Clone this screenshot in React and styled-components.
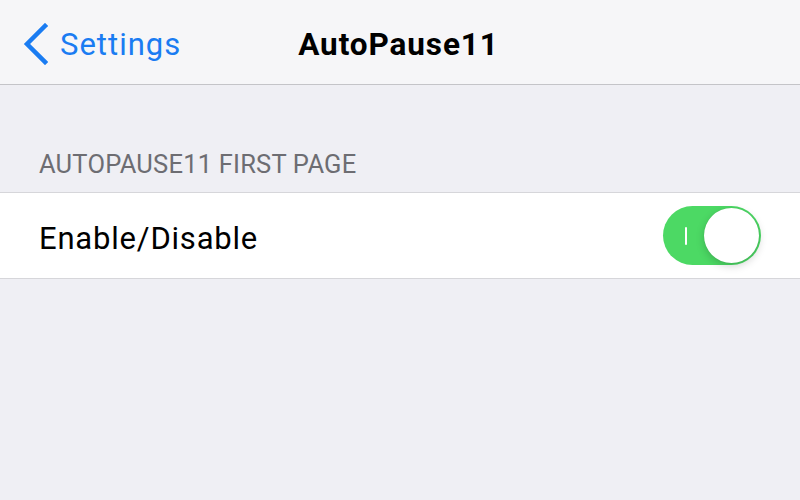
import React from "react";
import styled, { createGlobalStyle } from "styled-components";

const Global = createGlobalStyle`
  html, body { margin: 0; padding: 0; }
  body {
    width: 800px; height: 500px; overflow: hidden;
    background: #efeff4;
    font-family: Roboto, "Liberation Sans", sans-serif;
  }
`;

const Page = styled.div`
  display: flex;
  flex-direction: column;
  height: 500px;
  background: #efeff4;
`;

const NavBar = styled.div`
  height: 85px;
  box-sizing: border-box;
  background: #f6f6f8;
  border-bottom: 1px solid #c4c4c8;
  display: grid;
  grid-template-columns: 1fr auto 1fr;
  align-items: center;
  padding: 4px 0 0 23px;
`;

const Back = styled.div`
  display: flex;
  align-items: center;
  gap: 12px;
  color: #1a7cf2;
  font-size: 31px;
  letter-spacing: 1px;
`;

const Title = styled.div`
  font-size: 31.5px;
  font-weight: 700;
  color: #000;
  letter-spacing: 0.9px;
  margin-left: -26px;
`;

const SectionHeader = styled.div`
  margin-top: 62px;
  padding: 2px 0 0 39px;
  height: 45px;
  box-sizing: border-box;
  font-size: 25.5px;
  color: #6d6d72;
  letter-spacing: 0.2px;
`;

const Group = styled.div`
  background: #fff;
  border-top: 1px solid #d6d6da;
  border-bottom: 1px solid #d6d6da;
`;

const Row = styled.div`
  height: 85px;
  display: flex;
  align-items: center;
  justify-content: space-between;
  padding: 0 39px 0 39px;
`;

const Label = styled.div`
  font-size: 31px;
  color: #000;
  letter-spacing: 0.8px;
  padding-top: 5px;
`;

const Switch = styled.div`
  position: relative;
  width: 98px;
  height: 59px;
  border-radius: 30px;
  background: ${(p) => (p.$on ? "#4cd964" : "#e5e5ea")};
  display: flex;
  align-items: center;
  justify-content: ${(p) => (p.$on ? "flex-end" : "flex-start")};
  padding: 2px;
  box-sizing: border-box;
`;

const OnMark = styled.span`
  position: absolute;
  left: 22px;
  top: 21px;
  width: 2px;
  height: 18px;
  background: #fff;
  border-radius: 1px;
`;

const Knob = styled.div`
  width: 55px;
  height: 55px;
  border-radius: 50%;
  background: #fff;
  box-shadow: 0 3px 8px rgba(0, 0, 0, 0.18), 0 0 1px rgba(0, 0, 0, 0.15);
`;

export default function App() {
  return (
    <Page>
      <Global />
      <NavBar>
        <Back>
          <svg width="25" height="42" viewBox="0 0 25 42">
            <path d="M22 3 L4 21 L22 39" fill="none" stroke="#1a7cf2" strokeWidth="4.5" strokeLinecap="square" />
          </svg>
          <span>Settings</span>
        </Back>
        <Title>AutoPause11</Title>
        <div />
      </NavBar>
      <SectionHeader>AUTOPAUSE11 FIRST PAGE</SectionHeader>
      <Group>
        <Row>
          <Label>Enable/Disable</Label>
          <Switch $on>
            <OnMark />
            <Knob />
          </Switch>
        </Row>
      </Group>
    </Page>
  );
}
